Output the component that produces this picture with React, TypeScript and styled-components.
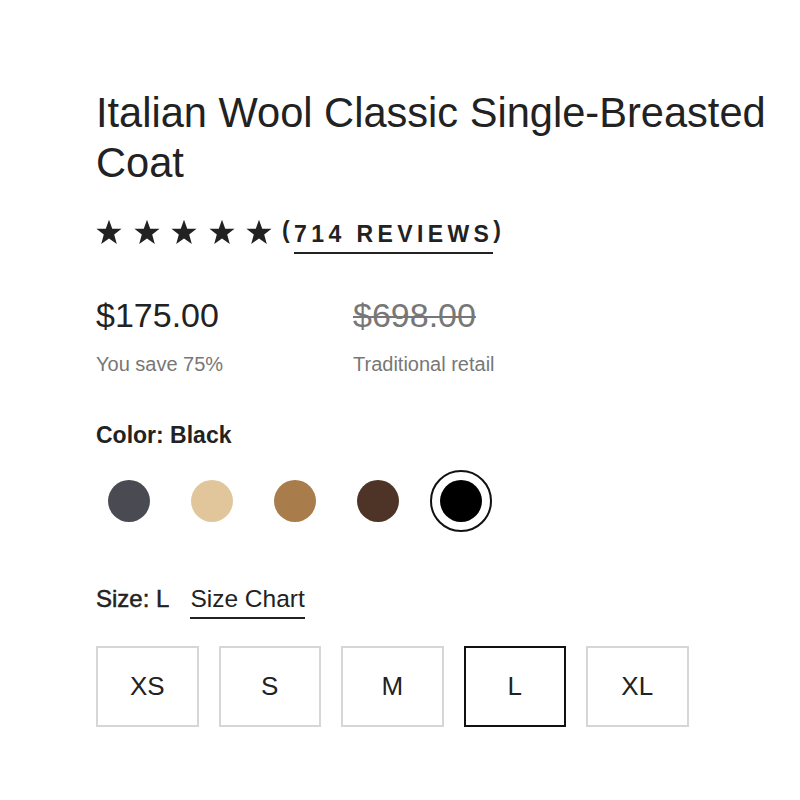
import React, { useState } from 'react';
import styled, { createGlobalStyle } from 'styled-components';

const GlobalStyle = createGlobalStyle`
    body {
        margin: 0;
        background: #fff;
        font-family: 'Liberation Sans', Arial, sans-serif;
        color: #222;
    }
`;

const COLORS = [
    { name: 'Charcoal', hex: '#4a4b52' },
    { name: 'Camel Light', hex: '#e1c69c' },
    { name: 'Camel', hex: '#a97d4b' },
    { name: 'Brown', hex: '#4e3426' },
    { name: 'Black', hex: '#000000' },
];

const SIZES = ['XS', 'S', 'M', 'L', 'XL'];

const Star = () => (
    <svg width='26' height='26' viewBox='0 0 24 24'>
        <polygon points='12,0.8 15,9 23.6,9.1 16.8,14.4 19.2,23 12,18 4.8,23 7.2,14.4 0.4,9.1 9,9' fill='#222' />
    </svg>
);

export default function App() {
    const [color, setColor] = useState('Black');
    const [size, setSize] = useState('L');

    return (
        <>
            <GlobalStyle />
            <Page>
                <Title>Italian Wool Classic Single-Breasted Coat</Title>

                <Rating>
                    <Stars>
                        {[0, 1, 2, 3, 4].map((i) => (
                            <Star key={i} />
                        ))}
                    </Stars>
                    <Reviews>
                        (<ReviewsLink>714 REVIEWS</ReviewsLink>)
                    </Reviews>
                </Rating>

                <Prices>
                    <PriceCol>
                        <Price>$175.00</Price>
                        <PriceNote>You save 75%</PriceNote>
                    </PriceCol>
                    <PriceCol>
                        <Price $old>$698.00</Price>
                        <PriceNote>Traditional retail</PriceNote>
                    </PriceCol>
                </Prices>

                <Label>Color: {color}</Label>
                <Swatches>
                    {COLORS.map((c) => (
                        <Swatch key={c.name} $active={c.name === color} onClick={() => setColor(c.name)} aria-label={c.name}>
                            <Dot style={{ background: c.hex }} />
                        </Swatch>
                    ))}
                </Swatches>

                <SizeHeader>
                    <SizeLabel>Size: {size}</SizeLabel>
                    <SizeChart>Size Chart</SizeChart>
                </SizeHeader>
                <Sizes>
                    {SIZES.map((s) => (
                        <SizeBox key={s} $active={s === size} onClick={() => setSize(s)}>
                            {s}
                        </SizeBox>
                    ))}
                </Sizes>
            </Page>
        </>
    );
}

const Page = styled.div`
    padding: 88px 20px 40px 96px;
    max-width: 700px;
`;

const Title = styled.h1`
    margin: 0;
    font-size: 41.6px;
    font-weight: 400;
    line-height: 50px;
    color: #222;
`;

const Rating = styled.div`
    display: flex;
    align-items: center;
    gap: 10px;
    margin-top: 28px;
    height: 32px;
`;

const Stars = styled.div`
    display: flex;
    gap: 11.5px;
`;

const Reviews = styled.span`
    font-size: 23px;
    font-weight: 700;
    letter-spacing: 4.4px;
    color: #222;
    transform: translateY(1px);
`;

const ReviewsLink = styled.span`
    display: inline-block;
    padding-bottom: 4px;
    border-bottom: 2px solid #222;
    transform: translateY(4px);
`;

const Prices = styled.div`
    display: grid;
    grid-template-columns: 257px auto;
    margin-top: 47px;
`;

const PriceCol = styled.div`
    display: flex;
    flex-direction: column;
    gap: 17px;
`;

const Price = styled.div<{ $old?: boolean }>`
    font-size: 34px;
    line-height: 40px;
    color: ${(p) => (p.$old ? '#777' : '#222')};
    text-decoration: ${(p) => (p.$old ? 'line-through' : 'none')};
    text-decoration-thickness: 2px;
`;

const PriceNote = styled.div`
    font-size: 20px;
    line-height: 24px;
    color: #777;
`;

const Label = styled.div`
    margin-top: 46px;
    font-size: 23px;
    line-height: 26px;
    font-weight: 700;
    color: #222;
`;

const Swatches = styled.div`
    display: flex;
    gap: 21px;
    margin: 22px 0 0 2px;
`;

const Swatch = styled.button<{ $active?: boolean }>`
    width: 62px;
    height: 62px;
    padding: 0;
    border-radius: 50%;
    border: 2px solid ${(p) => (p.$active ? '#111' : 'transparent')};
    background: #fff;
    display: flex;
    align-items: center;
    justify-content: center;
    cursor: pointer;
`;

const Dot = styled.span`
    width: 42px;
    height: 42px;
    border-radius: 50%;
`;

const SizeHeader = styled.div`
    display: flex;
    align-items: flex-start;
    gap: 21px;
    margin-top: 53px;
`;

const SizeLabel = styled.span`
    font-size: 24px;
    line-height: 28px;
    color: #222;
    -webkit-text-stroke: 0.5px #222;
`;

const SizeChart = styled.span`
    font-size: 24.5px;
    line-height: 28px;
    color: #222;
    padding-bottom: 4px;
    border-bottom: 2px solid #222;
    cursor: pointer;
`;

const Sizes = styled.div`
    display: flex;
    gap: 20px;
    margin-top: 27px;
`;

const SizeBox = styled.button<{ $active?: boolean }>`
    width: 102.5px;
    height: 81px;
    box-sizing: border-box;
    background: #fff;
    border: ${(p) => (p.$active ? '2px solid #111' : '2px solid #d6d6d6')};
    font-family: 'Liberation Sans', Arial, sans-serif;
    font-size: 26px;
    color: #222;
    cursor: pointer;
`;
